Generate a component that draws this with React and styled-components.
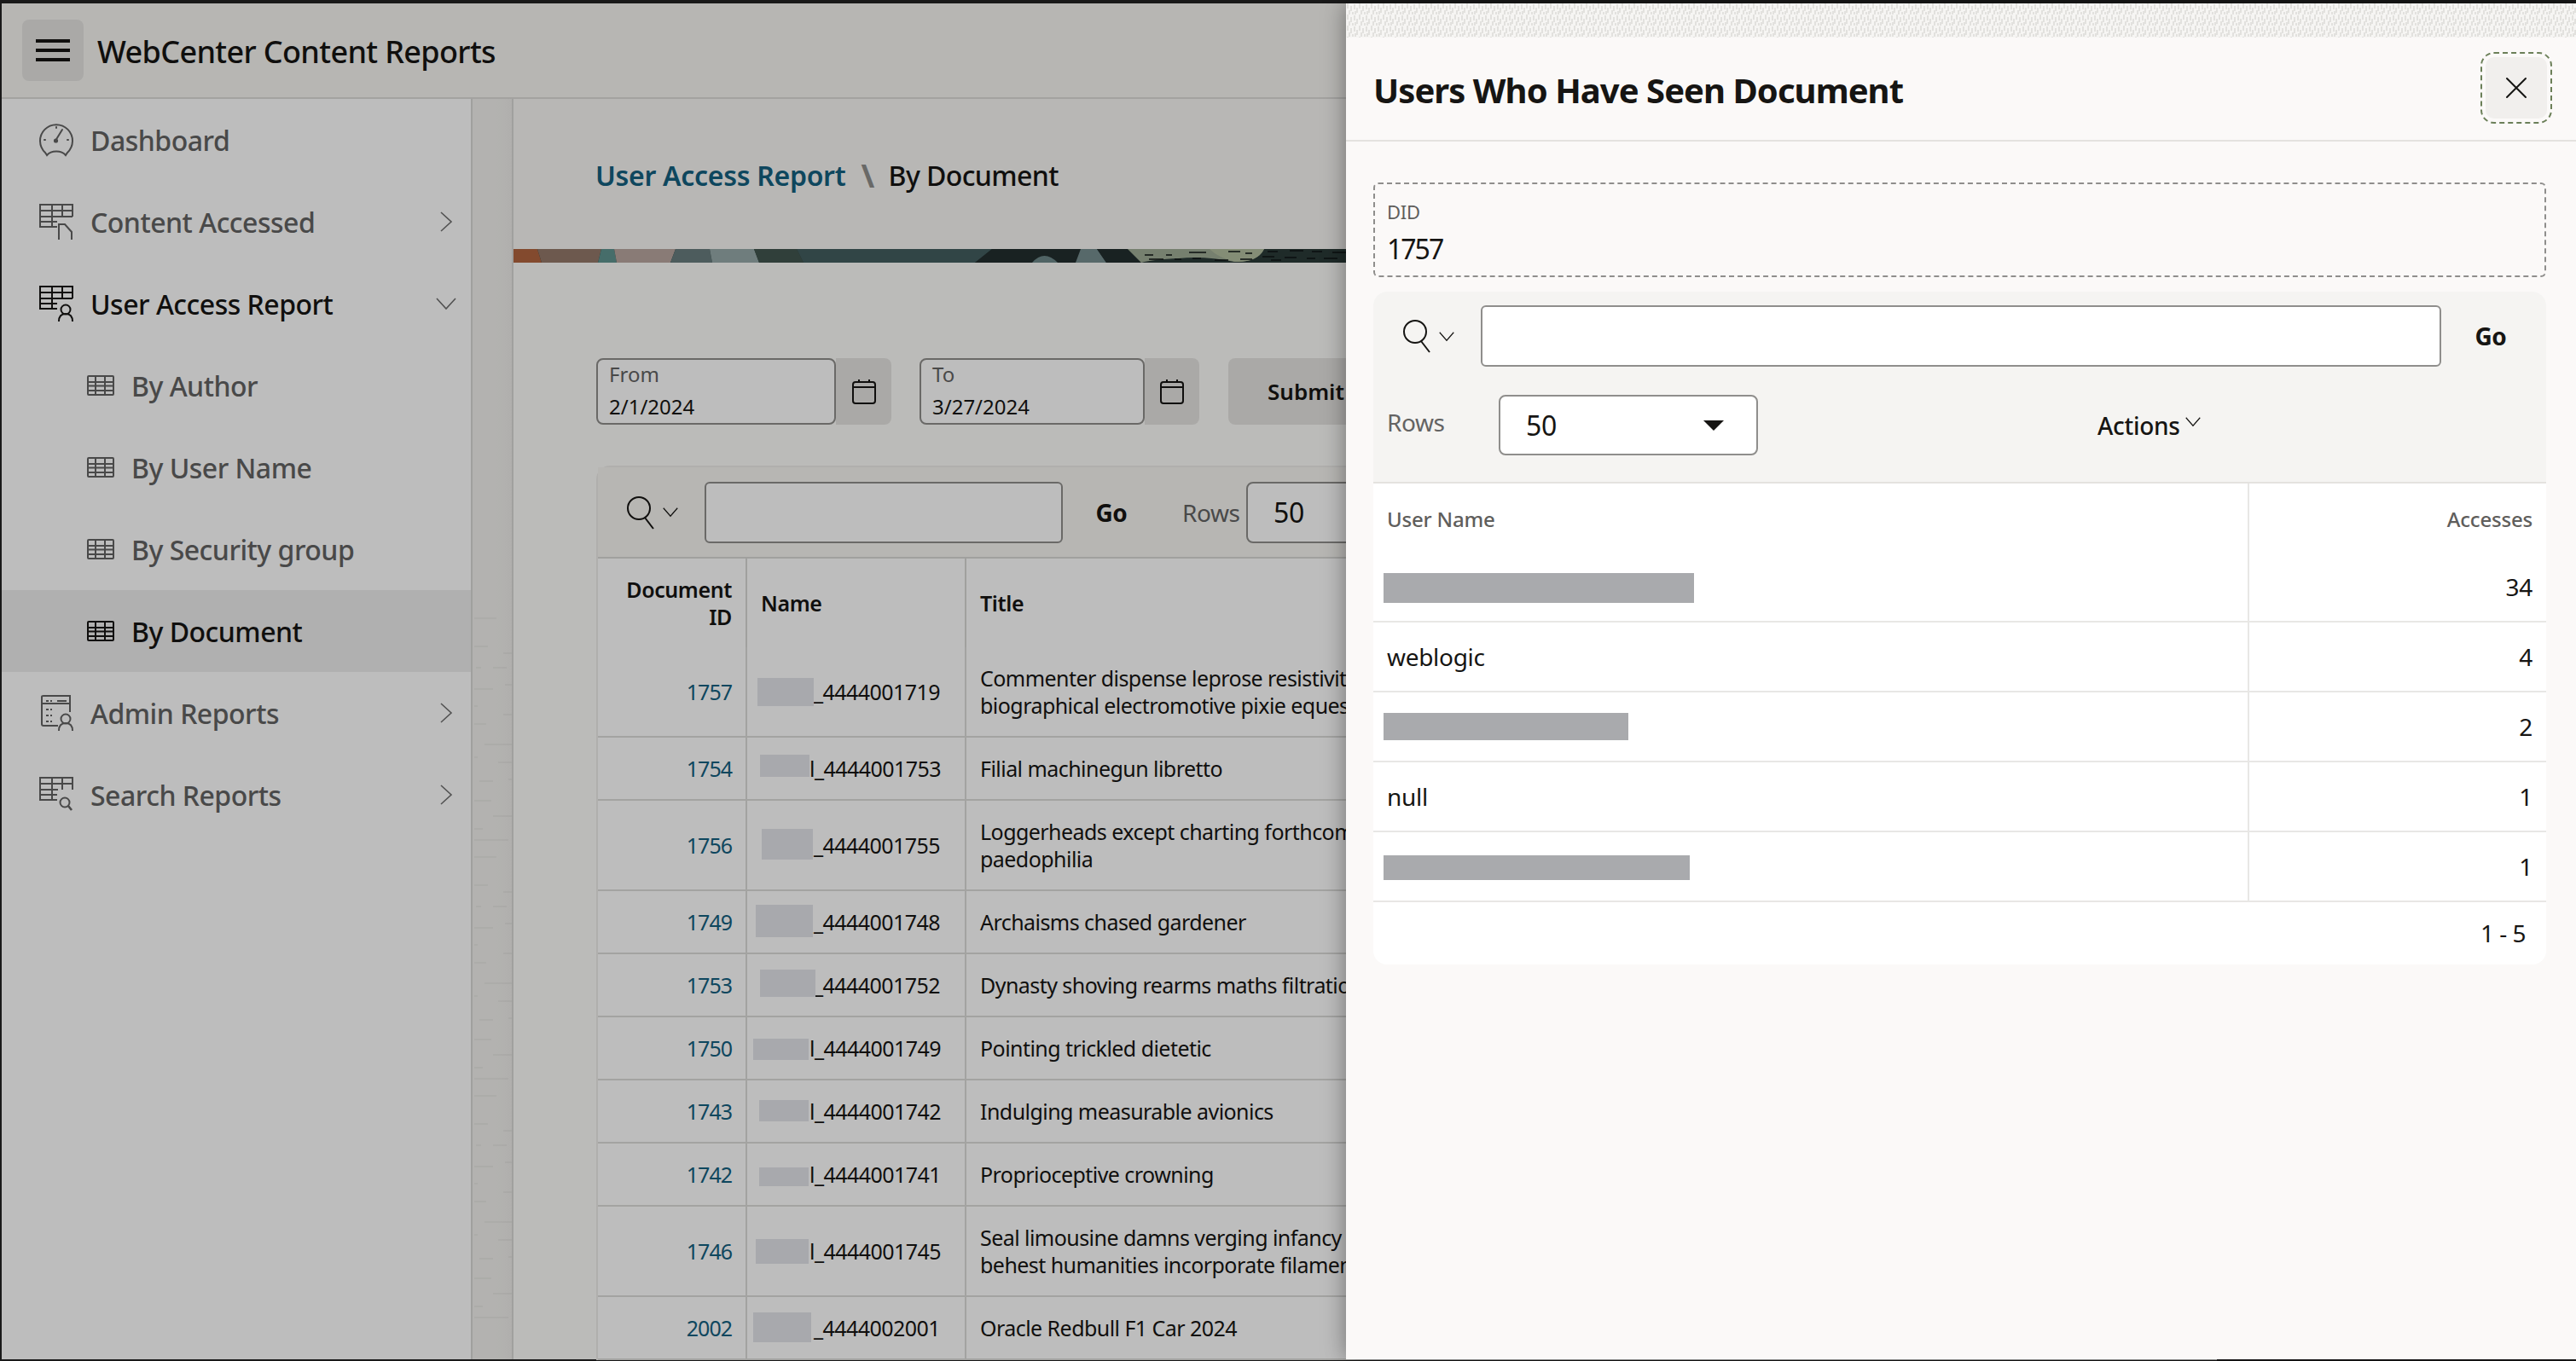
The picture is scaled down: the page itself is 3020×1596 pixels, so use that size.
import React from 'react'
import styled, { createGlobalStyle } from 'styled-components'

const GlobalStyle = createGlobalStyle`
  html, body { margin: 0; padding: 0; background: #222; }
  body { font-family: "Noto Sans", "Open Sans", sans-serif; color: #161513; }
  * { box-sizing: border-box; }
`

const Screen = styled.div`
  position: relative;
  width: 3020px;
  height: 1596px;
  padding: 4px 0 2px 2px;
  background: #222;
  overflow: hidden;
`

const Page = styled.div`
  display: flex;
  flex-direction: column;
  width: 100%;
  height: 100%;
  background: #fff;
`

const Header = styled.header`
  flex: none;
  display: flex;
  align-items: center;
  gap: 16px;
  height: 112px;
  padding-left: 24px;
  background: #f7f6f2;
  border-bottom: 2px solid #dcdbd8;
`

const MenuButton = styled.button`
  display: flex;
  flex-direction: column;
  justify-content: center;
  gap: 7px;
  width: 72px;
  height: 72px;
  padding: 0 16px;
  border: 0;
  border-radius: 8px;
  background: #e6e5e2;

  span {
    display: block;
    height: 4px;
    background: #161513;
  }
`

const AppTitle = styled.h1`
  margin: 2px 0 0;
  font-size: 36px;
  font-weight: 500;
  letter-spacing: -0.65px;
`

const Body = styled.div`
  flex: 1;
  display: flex;
  min-height: 0;
`

const Sidebar = styled.nav`
  flex: none;
  width: 552px;
  background: #fff;
  border-right: 2px solid #d8d8d6;
`

const NavItem = styled.a`
  display: flex;
  align-items: center;
  height: 96px;
  padding-left: ${p => (p.$sub ? '100px' : '44px')};
  padding-right: 22px;
  font-size: 32px;
  font-weight: 500;
  letter-spacing: -0.5px;
  color: ${p => (p.$current ? '#161513' : '#636363')};
  background: ${p => (p.$selected ? '#eeeeee' : 'transparent')};
`

const NavIconBox = styled.span`
  flex: none;
  display: flex;
  justify-content: flex-start;
  width: ${p => (p.$sub ? '52px' : '60px')};
`

const NavLabel = styled.span`
  flex: 1;
`

const NavChevron = styled.span`
  flex: none;
  color: #6f6f6f;
  margin-right: ${p => (p.$down ? '-5px' : '0')};
`

const Gutter = styled.div`
  flex: none;
  width: 46px;
  background: linear-gradient(90deg, #f2f1ee 60%, #eeedea 100%);
`

const GutterMarks = styled.svg`
  display: block;
  width: 46px;
  height: 1478px;
  stroke: rgba(0, 0, 0, 0.035);
  stroke-width: 2;
`

const Content = styled.main`
  flex: none;
  width: 2000px;
  background: #fdfcfa;
  border-left: 2px solid #d8d8d6;
`

const TitleBar = styled.div`
  display: flex;
  align-items: center;
  height: 176px;
  padding: 2px 0 0 96px;
  background: #f8f7f4;
  font-size: 32px;
  font-weight: 500;
  letter-spacing: -0.6px;
`

const Crumb = styled.a`
  color: #14607f;
  font-weight: 600;
  letter-spacing: -0.3px;
`

const CrumbSep = styled.span`
  margin: 0 17px 0 18px;
  color: #8e8e8c;
  font-size: 38px;
  font-weight: 700;
`

const Banner = styled.svg`
  display: block;
  width: 976px;
  height: 16px;
`

const FilterRow = styled.div`
  display: flex;
  align-items: stretch;
  height: 78px;
  margin: 112px 0 48px 97px;
`

const DateField = styled.div`
  display: flex;
  flex-direction: column;
  justify-content: center;
  width: ${p => p.$width}px;
  padding: 0 0 2px 13px;
  border: 2px solid #8f8e8c;
  border-radius: 8px;
  background: #fff;
`

const DateLabel = styled.span`
  font-size: 24px;
  line-height: 30px;
  color: #636363;
`

const DateValue = styled.span`
  margin-top: 8px;
  font-size: 24px;
  line-height: 30px;
`

const CalendarButton = styled.button`
  display: flex;
  align-items: center;
  justify-content: center;
  width: ${p => p.$width}px;
  margin-right: ${p => p.$gap}px;
  padding: 0;
  border: 0;
  border-radius: 0 8px 8px 0;
  background: #e6e5e2;
  color: #161513;
`

const SubmitButton = styled.button`
  width: 190px;
  padding: 0 0 0 46px;
  text-align: left;
  border: 0;
  border-radius: 8px;
  background: #e6e5e2;
  color: #161513;
  font: 600 26px "Noto Sans", sans-serif;
`

const ReportPanel = styled.section`
  width: 1900px;
  margin-left: 97px;
  border: 2px solid #eeedea;
  border-bottom: 0;
  border-radius: 16px 16px 0 0;
  background: #fff;
`

const BackToolbar = styled.div`
  display: flex;
  align-items: center;
  height: 107px;
  padding: 0 0 0 34px;
  background: #f7f6f2;
  border-bottom: 2px solid #d8d8d6;
`

const SearchMenu = styled.span`
  flex: none;
  display: flex;
  align-items: center;
  gap: 8px;
  width: ${p => p.$width}px;
  color: #161513;
`

const SearchInput = styled.div`
  flex: none;
  width: ${p => p.$width}px;
  height: 72px;
  border: 2px solid #8f8e8c;
  border-radius: 6px;
  background: #fff;
`

const GoText = styled.span`
  flex: none;
  width: ${p => p.$width}px;
  font-size: 28px;
  font-weight: 700;
  letter-spacing: -0.4px;
  text-align: center;
`

const RowsText = styled.span`
  flex: none;
  width: ${p => p.$width}px;
  margin-left: ${p => p.$left || 0}px;
  margin-top: ${p => p.$lift || 0}px;
  font-size: 28px;
  letter-spacing: -0.4px;
  color: #636363;
`

const SelectBox = styled.div`
  flex: none;
  display: flex;
  align-items: center;
  justify-content: space-between;
  width: ${p => p.$width}px;
  height: ${p => p.$height}px;
  padding: 0 38px 0 30px;
  border: 2px solid #8f8e8c;
  border-radius: 8px;
  background: #fff;
  font-size: 32px;
  letter-spacing: -0.4px;
`

const Table = styled.table`
  width: 100%;
  border-collapse: collapse;
  table-layout: fixed;
`

const BackHead = styled.th`
  height: 104px;
  padding: 0 16px;
  width: ${p => p.$width}px;
  border-right: 2px solid #d8d8d6;
  font-size: 25px;
  line-height: 32px;
  font-weight: 600;
  letter-spacing: -0.4px;
  text-align: ${p => (p.$right ? 'right' : 'left')};
`

const BackCell = styled.td`
  position: relative;
  padding: 20px 16px;
  border-right: 2px solid #dcdcda;
  border-bottom: 2px solid #dcdcda;
  font-size: 25px;
  line-height: 32px;
  letter-spacing: ${p => (p.$link ? '-1px' : '-0.55px')};
  white-space: nowrap;
  text-align: ${p => (p.$right ? 'right' : 'left')};
  color: ${p => (p.$link ? '#14607f' : '#161513')};
`

const NameText = styled.span`
  display: inline-block;
  padding-left: ${p => p.$pad}px;
`

const Redaction = styled.span`
  position: absolute;
  left: ${p => p.$left}px;
  top: ${p => p.$top}px;
  width: ${p => p.$w}px;
  height: ${p => p.$h}px;
  background: ${p => (p.$back ? '#e3e4ea' : '#a9aaad')};
`

const Scrim = styled.div`
  position: absolute;
  inset: 0;
  background: rgba(0, 0, 0, 0.26);
`

const Drawer = styled.aside`
  position: absolute;
  top: 4px;
  right: 0;
  bottom: 2px;
  width: 1442px;
  background: #fbf9f8;
  box-shadow: 0 0 26px rgba(0, 0, 0, 0.4);
`

const DrawerStrip = styled.svg`
  display: block;
  width: 100%;
  height: 40px;
`

const DrawerHead = styled.div`
  display: flex;
  align-items: center;
  justify-content: space-between;
  height: 122px;
  padding: 0 34px 2px 32px;
  border-bottom: 2px solid #e4e2df;
`

const DrawerTitle = styled.h2`
  margin: 4px 0 0;
  font-size: 40px;
  font-weight: 700;
  letter-spacing: -0.95px;
`

const CloseButton = styled.button`
  display: flex;
  align-items: center;
  justify-content: center;
  width: 72px;
  height: 72px;
  padding: 0;
  border: 0;
  border-radius: 10px;
  background: #f1efed;
  color: #161513;
  outline: 2px dashed #6b7f58;
  outline-offset: 4px;
`

const DrawerBody = styled.div`
  padding: 48px 35px 0 32px;
`

const DisplayField = styled.div`
  display: flex;
  flex-direction: column;
  height: 111px;
  padding: 17px 14px 0;
  border: 2px dashed #8f8e8c;
  border-radius: 6px;
`

const DisplayLabel = styled.span`
  font-size: 22px;
  line-height: 30px;
  letter-spacing: -0.3px;
  color: #5f5e5c;
`

const DisplayValue = styled.span`
  margin-top: 7px;
  font-size: 32px;
  line-height: 44px;
  letter-spacing: -2px;
`

const DrawerReport = styled.section`
  margin-top: 17px;
  border-radius: 16px;
  background: #fff;
  overflow: hidden;
`

const DrawerToolbar = styled.div`
  height: 225px;
  padding-top: 16px;
  background: #f5f4f2;
  border-bottom: 2px solid #e4e2df;
`

const ToolbarRow = styled.div`
  display: flex;
  align-items: center;
  margin-top: ${p => p.$gap || 0}px;
  padding-left: ${p => p.$pad}px;
`

const ActionsText = styled.span`
  display: flex;
  align-items: center;
  gap: 6px;
  margin-left: 398px;
  font-size: 28px;
  font-weight: 500;
  letter-spacing: -0.3px;

  svg {
    margin-top: -8px;
  }
`

const FrontHead = styled.th`
  height: 80px;
  padding: 2px 16px 0;
  border-right: ${p => (p.$right ? '0' : '2px solid #e8e7e5')};
  font-size: 24px;
  font-weight: 500;
  letter-spacing: -0.2px;
  color: #5f5e5c;
  text-align: ${p => (p.$right ? 'right' : 'left')};
`

const FrontCell = styled.td`
  position: relative;
  height: 82px;
  padding: 0 16px;
  border-right: ${p => (p.$right ? '0' : '2px solid #e8e7e5')};
  border-bottom: 2px solid #e8e7e5;
  font-size: 28px;
  letter-spacing: -0.3px;
  text-align: ${p => (p.$right ? 'right' : 'left')};
`

const Pager = styled.div`
  height: 73px;
  padding: 17px 24px 0 0;
  font-size: 28px;
  letter-spacing: -0.5px;
  text-align: right;
`

const Svg = styled.svg`
  display: block;
  fill: none;
  stroke: currentColor;
  stroke-width: ${p => p.$stroke || 2};
  overflow: visible;
`

const GaugeIcon = () => (
  <Svg width="40" height="40" viewBox="0 0 40 40" strokeLinecap="round">
    <path d="M9 38 L7 35 A19 19 0 1 1 33 35 L31 38 C26 32 14 32 9 38 Z" />
    <path d="M19 21 L27 8" />
    <circle cx="19.5" cy="21" r="1.6" fill="currentColor" />
    <path d="M6 20 h1 M33 20 h1 M20 5 v1" />
  </Svg>
)

const TableBase = () => <path d="M21 27 H1 V1 H39 V15 M1 8 H39 M1 15 H39 M1 21 H21 M15 1 V27 M27 1 V15" />

const TableDocIcon = () => (
  <Svg width="40" height="42" viewBox="0 0 40 42">
    <TableBase />
    <path d="M23 42 V24 H30 L38 33 V42" />
  </Svg>
)

const TableUserIcon = () => (
  <Svg width="40" height="42" viewBox="0 0 40 42">
    <TableBase />
    <circle cx="31" cy="28" r="5.5" />
    <path d="M23 42 C23 36 26 33 31 33 C36 33 39 36 39 42" />
  </Svg>
)

const TableSearchIcon = () => (
  <Svg width="40" height="42" viewBox="0 0 40 42">
    <path d="M21 27 H1 V1 H39 V15 M1 8 H39 M1 15 H22 M1 21 H21 M15 1 V27 M27 1 V15" />
    <circle cx="30" cy="30" r="5.5" />
    <path d="M34 34 L38 39" strokeWidth="2.6" />
  </Svg>
)

const AdminIcon = () => (
  <Svg width="40" height="42" viewBox="0 0 40 42">
    <path d="M22 36 H5 Q3 36 3 34 V2 Q3 1 5 1 H36 V20" />
    <path d="M3 10 H36 M21 7 H32 M8 7 h3 M13 7 h2 M8 17 h3 M13 17 h2 M8 24 h3 M13 24 h2 M8 31 h3 M13 31 h2" />
    <circle cx="31" cy="28" r="5.5" />
    <path d="M23 42 C23 36 26 33 31 33 C36 33 39 36 39 42" />
  </Svg>
)

const GridIcon = () => (
  <Svg width="32" height="24" viewBox="0 0 32 24">
    <rect x="1" y="1" width="30" height="22" rx="1" />
    <path d="M1 8 H31 M1 12.5 H31 M1 18 H31 M10 1 V23 M21 1 V23" />
  </Svg>
)

const ChevronRight = () => (
  <Svg width="14" height="24" viewBox="0 0 14 24" $stroke="1.6">
    <path d="M1 1 L13 12 L1 23" />
  </Svg>
)

const ChevronDown = ({ width = 24, height = 14, stroke = 1.6 }) => (
  <Svg width={width} height={height} viewBox="0 0 24 14" $stroke={stroke} preserveAspectRatio="none">
    <path d="M1 1 L12 13 L23 1" />
  </Svg>
)

const CalendarIcon = () => (
  <Svg width="28" height="30" viewBox="0 0 28 30">
    <rect x="1" y="4" width="26" height="25" rx="3" />
    <path d="M1 10 H27 M8 1 V5 M20 1 V5" />
  </Svg>
)

const SearchGlyph = () => (
  <Svg width="34" height="38" viewBox="0 0 34 38">
    <circle cx="14" cy="14" r="13" />
    <path d="M21 25 L31 38" />
  </Svg>
)

const Caret = styled.span`
  width: 0;
  height: 0;
  border-left: 12px solid transparent;
  border-right: 12px solid transparent;
  border-top: 12px solid #161513;
`

const navItems = [
  { label: 'Dashboard', icon: <GaugeIcon /> },
  { label: 'Content Accessed', icon: <TableDocIcon />, arrow: 'right' },
  { label: 'User Access Report', icon: <TableUserIcon />, arrow: 'down', current: true },
  { label: 'By Author', sub: true },
  { label: 'By User Name', sub: true },
  { label: 'By Security group', sub: true },
  { label: 'By Document', sub: true, current: true, selected: true },
  { label: 'Admin Reports', icon: <AdminIcon />, arrow: 'right' },
  { label: 'Search Reports', icon: <TableSearchIcon />, arrow: 'right' },
]

const documents = [
  { id: '1757', name: '_4444001719', pad: 62, box: [12, 36, 66, 33], title: ['Commenter dispense leprose resistivity', 'biographical electromotive pixie equestrian'] },
  { id: '1754', name: 'l_4444001753', pad: 57, box: [15, 20, 58, 26], title: ['Filial machinegun libretto'] },
  { id: '1756', name: '_4444001755', pad: 62, box: [17, 33, 60, 36], title: ['Loggerheads except charting forthcoming', 'paedophilia'] },
  { id: '1749', name: '_4444001748', pad: 62, box: [10, 16, 67, 38], title: ['Archaisms chased gardener'] },
  { id: '1753', name: '_4444001752', pad: 62, box: [15, 18, 65, 32], title: ['Dynasty shoving rearms maths filtration'] },
  { id: '1750', name: 'l_4444001749', pad: 57, box: [7, 25, 65, 25], title: ['Pointing trickled dietetic'] },
  { id: '1743', name: 'l_4444001742', pad: 57, box: [14, 23, 58, 25], title: ['Indulging measurable avionics'] },
  { id: '1742', name: 'l_4444001741', pad: 57, box: [14, 28, 58, 22], title: ['Proprioceptive crowning'] },
  { id: '1746', name: 'l_4444001745', pad: 57, box: [10, 38, 62, 29], title: ['Seal limousine damns verging infancy', 'behest humanities incorporate filaments'] },
  { id: '2002', name: '_4444002001', pad: 62, box: [7, 18, 68, 35], title: ['Oracle Redbull F1 Car 2024'] },
]

const accesses = [
  { count: '34', box: [12, 25, 364, 35] },
  { user: 'weblogic', count: '4' },
  { count: '2', box: [12, 24, 287, 32] },
  { user: 'null', count: '1' },
  { count: '1', box: [12, 27, 359, 29] },
]

// faint specks of the page background showing through the gutter: [x, y, length]
const gutterSpecks = [
  [2, 609, 26], [2, 642, 16], [36, 650, 10], [4, 667, 6], [24, 667, 16], [2, 692, 22], [38, 687, 8],
  [2, 712, 4], [36, 722, 14], [2, 733, 14], [14, 757, 32], [2, 772, 4], [30, 778, 18], [8, 800, 16],
  [42, 798, 4], [2, 823, 20], [24, 841, 22], [2, 856, 10], [2, 869, 40],
]

const repeatedSpecks = [0, 280, 560].flatMap(shift =>
  gutterSpecks.map(([x, y, len]) => [x, y + shift, len])
)

const Mask = ({ box, back }) => (
  <Redaction $back={back} $left={box[0]} $top={box[1]} $w={box[2]} $h={box[3]} />
)

function BannerArt() {
  return (
    <Banner viewBox="0 0 976 16" preserveAspectRatio="none">
      <rect width="976" height="16" fill="#2a3a38" />
      <polygon points="0,0 28,0 33,16 0,16" fill="#b1643f" />
      <polygon points="28,0 103,0 99,16 33,16" fill="#94796a" />
      <polygon points="103,0 118,0 121,16 99,16" fill="#5f9490" />
      <polygon points="118,0 190,0 184,16 121,16" fill="#b9a7a0" />
      <polygon points="190,0 230,0 233,16 184,16" fill="#687d7e" />
      <polygon points="230,0 282,0 288,16 233,16" fill="#96a9a9" />
      <polygon points="282,0 332,0 340,16 288,16" fill="#42564f" />
      <polygon points="332,0 561,0 541,16 340,16" fill="#435e5f" />
      <polygon points="561,0 665,0 659,16 541,16" fill="#222f2f" />
      <path d="M608 16 Q622 0 638 16 Z" fill="#6d8889" />
      <polygon points="665,0 684,0 695,16 659,16" fill="#768e90" />
      <polygon points="684,0 720,0 736,16 695,16" fill="#222f2f" />
      <path d="M720 0 H880 Q872 16 845 15 Q810 8 780 11 Q750 12 736 16 Z" fill="#a0ad96" />
      <path d="M816 0 H880 Q872 16 846 15 Q826 10 816 0 Z" fill="#b3bf9f" />
      <g stroke="#0f1514" strokeWidth="1.4">
        <path d="M792 4 H812 M740 7 H750 M765 7 H772 M838 3 H852 M858 5 H866 M884 3 H896 M910 2 H926 M936 3 H948 M960 4 H976" />
        <path d="M745 12 H762 M775 12 H783 M796 11 H806 M822 13 H838 M852 12 H866 M878 9 H892 M904 10 H918 M930 11 H940 M950 11 H966 M888 13 H900" />
      </g>
    </Banner>
  )
}

function StripTexture() {
  return (
    <DrawerStrip aria-hidden="true">
      <defs>
        <pattern id="weave" width="14" height="13" patternUnits="userSpaceOnUse">
          <rect width="14" height="13" fill="#f6f5f3" />
          <g stroke="#e2e1de" strokeWidth="2">
            <path d="M2 0 V6 M6 3 V9 M10 1 V7 M13 5 V11 M4 8 V13 M8 10 V13 M11 9 V13" />
          </g>
        </pattern>
      </defs>
      <rect width="100%" height="40" fill="url(#weave)" />
    </DrawerStrip>
  )
}

export default function App() {
  return (
    <>
      <GlobalStyle />
      <Screen>
        <Page>
          <Header>
            <MenuButton aria-label="Menu">
              <span />
              <span />
              <span />
            </MenuButton>
            <AppTitle>WebCenter Content Reports</AppTitle>
          </Header>
          <Body>
            <Sidebar>
              {navItems.map(item => (
                <NavItem key={item.label} $sub={item.sub} $current={item.current} $selected={item.selected}>
                  <NavIconBox $sub={item.sub}>{item.sub ? <GridIcon /> : item.icon}</NavIconBox>
                  <NavLabel>{item.label}</NavLabel>
                  {item.arrow === 'right' && <NavChevron><ChevronRight /></NavChevron>}
                  {item.arrow === 'down' && <NavChevron $down><ChevronDown /></NavChevron>}
                </NavItem>
              ))}
            </Sidebar>
            <Gutter>
              <GutterMarks aria-hidden="true">
                {repeatedSpecks.map(([x, y, len]) => (
                  <line key={`${x}-${y}`} x1={x} y1={y} x2={x + len} y2={y} />
                ))}
              </GutterMarks>
            </Gutter>
            <Content>
              <TitleBar>
                <Crumb>User Access Report</Crumb>
                <CrumbSep>\</CrumbSep>
                <span>By Document</span>
              </TitleBar>
              <BannerArt />
              <FilterRow>
                <DateField $width={281}>
                  <DateLabel>From</DateLabel>
                  <DateValue>2/1/2024</DateValue>
                </DateField>
                <CalendarButton $width={65} $gap={33}><CalendarIcon /></CalendarButton>
                <DateField $width={264}>
                  <DateLabel>To</DateLabel>
                  <DateValue>3/27/2024</DateValue>
                </DateField>
                <CalendarButton $width={64} $gap={34}><CalendarIcon /></CalendarButton>
                <SubmitButton>Submit</SubmitButton>
              </FilterRow>
              <ReportPanel>
                <BackToolbar>
                  <SearchMenu $width={91}>
                    <SearchGlyph />
                    <ChevronDown width={18} height={11} />
                  </SearchMenu>
                  <SearchInput $width={420} />
                  <GoText $width={114}>Go</GoText>
                  <RowsText $width={75} $left={26}>Rows</RowsText>
                  <SelectBox $width={300} $height={72}>50</SelectBox>
                </BackToolbar>
                <Table>
                  <thead>
                    <tr>
                      <BackHead $width={174} $right>Document<br />ID</BackHead>
                      <BackHead $width={257}>Name</BackHead>
                      <BackHead>Title</BackHead>
                    </tr>
                  </thead>
                  <tbody>
                    {documents.map(doc => (
                      <tr key={doc.id}>
                        <BackCell $right $link>{doc.id}</BackCell>
                        <BackCell>
                          <NameText $pad={doc.pad}>{doc.name}</NameText>
                          <Mask box={doc.box} back />
                        </BackCell>
                        <BackCell>
                          {doc.title.map(line => <div key={line}>{line}</div>)}
                        </BackCell>
                      </tr>
                    ))}
                  </tbody>
                </Table>
              </ReportPanel>
            </Content>
          </Body>
        </Page>
        <Scrim />
        <Drawer>
          <StripTexture />
          <DrawerHead>
            <DrawerTitle>Users Who Have Seen Document</DrawerTitle>
            <CloseButton aria-label="Close">
              <Svg width="24" height="24" viewBox="0 0 24 24" strokeLinecap="round">
                <path d="M1 1 L23 23 M23 1 L1 23" />
              </Svg>
            </CloseButton>
          </DrawerHead>
          <DrawerBody>
            <DisplayField>
              <DisplayLabel>DID</DisplayLabel>
              <DisplayValue>1757</DisplayValue>
            </DisplayField>
            <DrawerReport>
              <DrawerToolbar>
                <ToolbarRow $pad={35}>
                  <SearchMenu $width={91}>
                    <SearchGlyph />
                    <ChevronDown width={18} height={11} />
                  </SearchMenu>
                  <SearchInput $width={1126} />
                  <GoText $width={116}>Go</GoText>
                </ToolbarRow>
                <ToolbarRow $pad={16} $gap={33}>
                  <RowsText $width={131} $lift={-8}>Rows</RowsText>
                  <SelectBox $width={304} $height={71}>
                    50
                    <Caret />
                  </SelectBox>
                  <ActionsText>Actions <ChevronDown width={18} height={11} /></ActionsText>
                </ToolbarRow>
              </DrawerToolbar>
              <Table>
                <colgroup>
                  <col style={{ width: '1026px' }} />
                  <col />
                </colgroup>
                <thead>
                  <tr>
                    <FrontHead>User Name</FrontHead>
                    <FrontHead $right>Accesses</FrontHead>
                  </tr>
                </thead>
                <tbody>
                  {accesses.map((row, i) => (
                    <tr key={i}>
                      <FrontCell>
                        {row.user}
                        {row.box && <Mask box={row.box} />}
                      </FrontCell>
                      <FrontCell $right>{row.count}</FrontCell>
                    </tr>
                  ))}
                </tbody>
              </Table>
              <Pager>1 - 5</Pager>
            </DrawerReport>
          </DrawerBody>
        </Drawer>
      </Screen>
    </>
  )
}
